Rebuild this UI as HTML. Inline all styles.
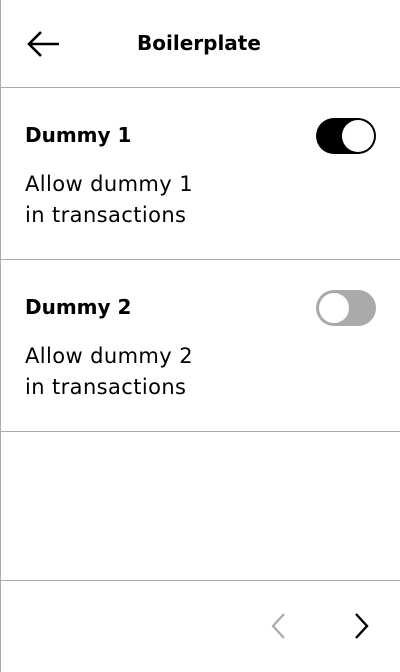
<!DOCTYPE html>
<html><head><style>
body{margin:0;width:400px;height:672px;background:#fff;font-family:"DejaVu Sans",sans-serif;color:#000;position:relative;overflow:hidden}
.lb{position:absolute;left:0;top:0;width:1px;height:672px;background:#aaa}
.hr{position:absolute;left:0;width:400px;height:1px;background:#aaa}
.t{position:absolute;white-space:nowrap}
.title{font-weight:bold;font-size:20px}
.desc{font-size:21px;line-height:31px;letter-spacing:0.4px}
.tg{position:absolute;left:316px;width:60px;height:36px;border-radius:18px;box-sizing:border-box}
</style></head><body>
<div class="lb"></div>
<svg style="position:absolute;left:26px;top:30px" width="36" height="28" viewBox="0 0 36 28"><path d="M3 14H33M15 2L3 14L15 26" fill="none" stroke="#000" stroke-width="2.6"/></svg>
<div class="t" style="left:137px;top:31px;font-size:20px;font-weight:bold">Boilerplate</div>
<div class="hr" style="top:87px"></div>
<div class="t title" style="left:25px;top:123px">Dummy 1</div>
<div class="t desc" style="left:25px;top:169px">Allow dummy 1<br>in transactions</div>
<div class="tg" style="top:118px;background:#000"><div style="position:absolute;left:26px;top:2px;width:32px;height:32px;border-radius:50%;background:#fff"></div></div>
<div class="hr" style="top:259px"></div>
<div class="t title" style="left:25px;top:295px">Dummy 2</div>
<div class="t desc" style="left:25px;top:341px">Allow dummy 2<br>in transactions</div>
<div class="tg" style="top:290px;background:#aaa"><div style="position:absolute;left:1px;top:1px;width:34px;height:34px;border-radius:50%;background:#aaa"><div style="position:absolute;left:2px;top:2px;width:30px;height:30px;border-radius:50%;background:#fff"></div></div></div>
<div class="hr" style="top:431px"></div>
<div class="hr" style="top:580px"></div>
<svg style="position:absolute;left:270px;top:612px" width="18" height="28" viewBox="0 0 18 28"><path d="M14 2L3 14L14 26" fill="none" stroke="#aaa" stroke-width="2.2"/></svg>
<svg style="position:absolute;left:352px;top:612px" width="18" height="28" viewBox="0 0 18 28"><path d="M4 2L15 14L4 26" fill="none" stroke="#000" stroke-width="2.4"/></svg>
</body></html>
